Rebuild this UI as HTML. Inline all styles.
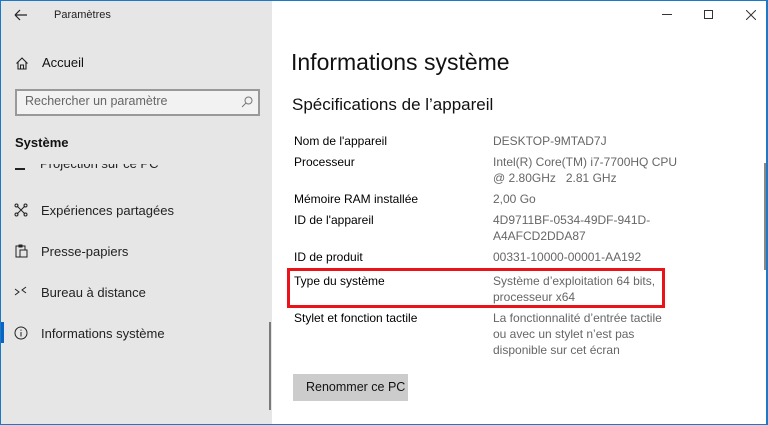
<!DOCTYPE html><html><head><meta charset="utf-8"><style>
*{margin:0;padding:0;box-sizing:border-box}
body{width:768px;height:425px;overflow:hidden;background:#fff;font-family:"Liberation Sans",sans-serif;position:relative;color:#000}
.a{position:absolute;white-space:nowrap}
.s{font-size:12px;line-height:16px}
.g{color:#666}
#side{position:absolute;left:0;top:0;width:272px;height:425px;background:#e6e6e6}
</style></head><body>
<div id="side"></div>
<div class="a" style="left:0;top:0;width:768px;height:425px;border:1px solid #1979ca;border-right-width:2px"></div>
<svg class="a" style="left:14px;top:8px" width="14" height="14"><path d="M1 7H13M1 7L6 2M1 7L6 12" stroke="#222" stroke-width="1.2" fill="none"/></svg>
<div class="a" style="left:54px;top:9px;font-size:11px;color:#222">Paramètres</div>
<svg class="a" style="left:15px;top:56px" width="14" height="14"><path d="M1.5 7.5L7 2L12.5 7.5M3 6V13H11V6M5.5 13V9H8.5V13" stroke="#222" stroke-width="1.1" fill="none"/></svg>
<div class="a" style="left:42px;top:55px;font-size:13px;color:#111">Accueil</div>
<div class="a" style="left:15px;top:89px;width:245px;height:27px;border:2px solid #999;background:#f2f2f2"></div>
<div class="a" style="left:25px;top:94px;font-size:12.5px;color:#666">Rechercher un paramètre</div>
<svg class="a" style="left:241px;top:96px" width="12" height="12"><circle cx="7.5" cy="4.5" r="3.5" stroke="#777" fill="none"/><path d="M5 7L1 11" stroke="#777"/></svg>
<div class="a" style="left:15px;top:135px;font-size:13px;font-weight:bold;color:#111">Système</div>
<div class="a" style="left:0;top:164px;width:272px;height:8px;overflow:hidden"><div class="a" style="left:40px;top:-8px;font-size:13px;color:#222">Projection sur ce PC</div><div class="a" style="left:15px;top:4px;width:10px;height:2px;background:#222"></div></div>
<svg class="a" style="left:14px;top:203px" width="14" height="14" stroke="#222" fill="none"><path d="M3 3L11 11M11 3L3 11"/><circle cx="2.5" cy="2.5" r="1.5"/><circle cx="11.5" cy="2.5" r="1.5"/><circle cx="2.5" cy="11.5" r="1.5"/><circle cx="11.5" cy="11.5" r="1.5"/></svg>
<div class="a" style="left:41px;top:203px;font-size:13px;color:#222">Expériences partagées</div>
<svg class="a" style="left:15px;top:244px" width="14" height="14" stroke="#222" fill="none"><rect x="1" y="2" width="9" height="11"/><rect x="5" y="6" width="7" height="7" fill="#e6e6e6"/><path d="M4 1H7V3H4Z"/></svg>
<div class="a" style="left:41px;top:244px;font-size:13px;color:#222">Presse-papiers</div>
<svg class="a" style="left:14px;top:285px" width="14" height="14" stroke="#222" fill="none"><path d="M1 4L5 7L1 10M12 2L8 5L12 8"/></svg>
<div class="a" style="left:41px;top:285px;font-size:13px;color:#222">Bureau à distance</div>
<div class="a" style="left:1px;top:322px;width:3px;height:21px;background:#0a64c2"></div>
<svg class="a" style="left:14px;top:326px" width="14" height="14"><circle cx="7" cy="7" r="6" stroke="#222" fill="none"/><path d="M7 6V10.5M7 3.6V4.8" stroke="#222"/></svg>
<div class="a" style="left:41px;top:326px;font-size:13px;color:#222">Informations système</div>
<div class="a" style="left:269px;top:322px;width:2px;height:88px;background:#7a7a7a"></div>
<div class="a" style="left:662px;top:14px;width:10px;height:1px;background:#333"></div>
<div class="a" style="left:704px;top:10px;width:9px;height:9px;border:1px solid #333"></div>
<svg class="a" style="left:746px;top:10px" width="10" height="10"><path d="M0 0L10 10M10 0L0 10" stroke="#333"/></svg>
<div class="a" style="left:291px;top:49px;font-size:23px;color:#111">Informations système</div>
<div class="a" style="left:292px;top:95px;font-size:17px;color:#111">Spécifications de l’appareil</div>
<div class="a" style="left:764px;top:163px;width:2px;height:107px;background:#888"></div>
<div class="a s" style="left:294px;top:133px">Nom de l'appareil</div>
<div class="a s g" style="left:493px;top:133px">DESKTOP-9MTAD7J</div>
<div class="a s" style="left:294px;top:154px">Processeur</div>
<div class="a s g" style="left:493px;top:154px">Intel(R) Core(TM) i7-7700HQ CPU<br>@ 2.80GHz&nbsp;&nbsp; 2.81 GHz</div>
<div class="a s" style="left:294px;top:191px">Mémoire RAM installée</div>
<div class="a s g" style="left:493px;top:191px">2,00 Go</div>
<div class="a s" style="left:294px;top:212px">ID de l'appareil</div>
<div class="a s g" style="left:493px;top:212px">4D9711BF-0534-49DF-941D-<br>A4AFCD2DDA87</div>
<div class="a s" style="left:294px;top:249px">ID de produit</div>
<div class="a s g" style="left:493px;top:249px">00331-10000-00001-AA192</div>
<div class="a s" style="left:294px;top:273px">Type du système</div>
<div class="a s g" style="left:493px;top:273px">Système d’exploitation 64 bits,<br>processeur x64</div>
<div class="a" style="left:287px;top:268px;width:378px;height:40px;border:3px solid #e8141a"></div>
<div class="a s" style="left:294px;top:310px">Stylet et fonction tactile</div>
<div class="a s g" style="left:493px;top:310px">La fonctionnalité d’entrée tactile<br>ou avec un stylet n’est pas<br>disponible sur cet écran</div>
<div class="a" style="left:293px;top:374px;width:115px;height:27px;background:#ccc"></div>
<div class="a" style="left:306px;top:380px;font-size:12.5px;color:#111">Renommer ce PC</div>
</body></html>
